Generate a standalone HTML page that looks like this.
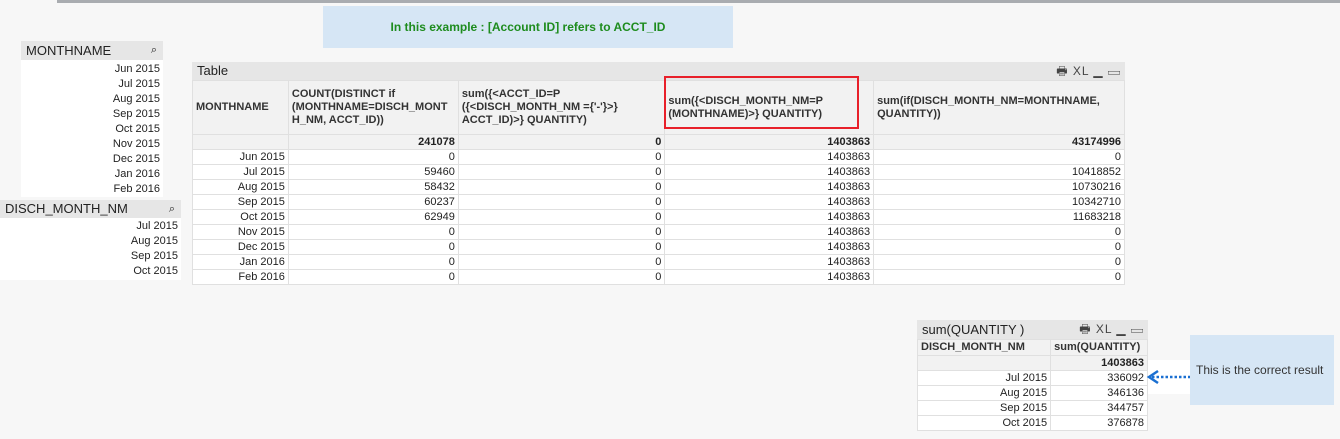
<!DOCTYPE html>
<html><head><style>
body{margin:0;width:1340px;height:439px;background:#f7f7f7;font-family:"Liberation Sans",sans-serif;font-size:11px;color:#222;position:relative;overflow:hidden}
.a{position:absolute;box-sizing:border-box}
.hd{background:#e6e6e6;font-size:13px;padding-left:5px;line-height:19px}
.row{position:absolute;left:0;right:0;height:15px;line-height:15px;text-align:right;padding-right:3px;box-sizing:border-box}
table{border-collapse:collapse;font-size:11px;position:absolute}
td{border:1px solid #e0e0e0;padding:0 3px;height:14px;line-height:14px;text-align:right;background:#fff;box-sizing:border-box}
tr.h td{background:#f2f2f2;text-align:left;font-weight:bold;vertical-align:middle;line-height:13px;color:#333}
tr.t td{background:#f2f2f2;font-weight:bold}
.ic{float:right;margin-right:4px;font-size:12px;color:#444;letter-spacing:1px}
</style></head><body>
<div class="a" style="left:57px;top:0;width:1283px;height:3px;background:#a9acb0"></div>
<div class="a" style="left:323px;top:6px;width:410px;height:42px;background:#d6e6f5;color:#1e8c1e;font-weight:bold;font-size:12px;text-align:center;line-height:42px">In this example : [Account ID] refers to ACCT_ID</div>

<div class="a" style="left:21px;top:41px;width:142px;height:156px;background:#fff">
<div class="hd" style="height:19px">MONTHNAME<span style="float:right;margin-right:6px;font-size:11px">&#x2315;</span></div>
<div class="row" style="top:21px">Jun 2015</div><div class="row" style="top:36px">Jul 2015</div><div class="row" style="top:51px">Aug 2015</div><div class="row" style="top:66px">Sep 2015</div><div class="row" style="top:81px">Oct 2015</div><div class="row" style="top:96px">Nov 2015</div><div class="row" style="top:111px">Dec 2015</div><div class="row" style="top:126px">Jan 2016</div><div class="row" style="top:141px">Feb 2016</div>
</div>

<div class="a" style="left:0;top:200px;width:181px;height:80px;background:#fff">
<div class="hd" style="height:18px;line-height:18px">DISCH_MONTH_NM<span style="float:right;margin-right:6px;font-size:11px">&#x2315;</span></div>
<div class="row" style="top:19px">Jul 2015</div><div class="row" style="top:34px">Aug 2015</div><div class="row" style="top:49px">Sep 2015</div><div class="row" style="top:64px">Oct 2015</div>
</div>

<div class="a hd" style="left:192px;top:62px;width:933px;height:18px;line-height:18px">Table<span class="ic">&#x1F5B6; XL ▁ ▭</span></div>
<table style="left:192px;top:80px;width:933px">
<colgroup><col style="width:96px"><col style="width:170px"><col style="width:207px"><col style="width:209px"><col style="width:251px"></colgroup>
<tr class="h" style="height:54px"><td>MONTHNAME</td><td>COUNT(DISTINCT if (MONTHNAME=DISCH_MONT H_NM, ACCT_ID))</td><td>sum({&lt;ACCT_ID=P ({&lt;DISCH_MONTH_NM ={'-'}&gt;} ACCT_ID)&gt;} QUANTITY)</td><td>sum({&lt;DISCH_MONTH_NM=P (MONTHNAME)&gt;} QUANTITY)</td><td>sum(if(DISCH_MONTH_NM=MONTHNAME, QUANTITY))</td></tr>
<tr class="t"><td></td><td>241078</td><td>0</td><td>1403863</td><td>43174996</td></tr>
<tr><td>Jun 2015</td><td>0</td><td>0</td><td>1403863</td><td>0</td></tr>
<tr><td>Jul 2015</td><td>59460</td><td>0</td><td>1403863</td><td>10418852</td></tr>
<tr><td>Aug 2015</td><td>58432</td><td>0</td><td>1403863</td><td>10730216</td></tr>
<tr><td>Sep 2015</td><td>60237</td><td>0</td><td>1403863</td><td>10342710</td></tr>
<tr><td>Oct 2015</td><td>62949</td><td>0</td><td>1403863</td><td>11683218</td></tr>
<tr><td>Nov 2015</td><td>0</td><td>0</td><td>1403863</td><td>0</td></tr>
<tr><td>Dec 2015</td><td>0</td><td>0</td><td>1403863</td><td>0</td></tr>
<tr><td>Jan 2016</td><td>0</td><td>0</td><td>1403863</td><td>0</td></tr>
<tr><td>Feb 2016</td><td>0</td><td>0</td><td>1403863</td><td>0</td></tr>
</table>
<div class="a" style="left:664px;top:76px;width:195px;height:53px;border:2px solid #e8202a"></div>

<div class="a hd" style="left:917px;top:320px;width:231px;height:19px">sum(QUANTITY )<span class="ic">&#x1F5B6; XL ▁ ▭</span></div>
<table style="left:917px;top:339px;width:231px">
<colgroup><col style="width:134px"><col style="width:97px"></colgroup>
<tr class="h" style="height:16px"><td>DISCH_MONTH_NM</td><td>sum(QUANTITY)</td></tr>
<tr class="t"><td></td><td>1403863</td></tr>
<tr><td>Jul 2015</td><td>336092</td></tr>
<tr><td>Aug 2015</td><td>346136</td></tr>
<tr><td>Sep 2015</td><td>344757</td></tr>
<tr><td>Oct 2015</td><td>376878</td></tr>
</table>
<div class="a" style="left:1148px;top:360px;width:42px;height:34px;background:#fff"></div>
<svg class="a" style="left:1146px;top:368px" width="46" height="18"><path d="M12 3 L3 9 L12 15" stroke="#1a6fd1" stroke-width="2.5" fill="none"/><line x1="6" y1="9" x2="44" y2="9" stroke="#1a6fd1" stroke-width="2.5" stroke-dasharray="2.5 2"/></svg>
<div class="a" style="left:1190px;top:335px;width:144px;height:70px;background:#d6e6f5;font-size:12px;line-height:70px;padding-left:6px;color:#333">This is the correct result</div>
</body></html>
